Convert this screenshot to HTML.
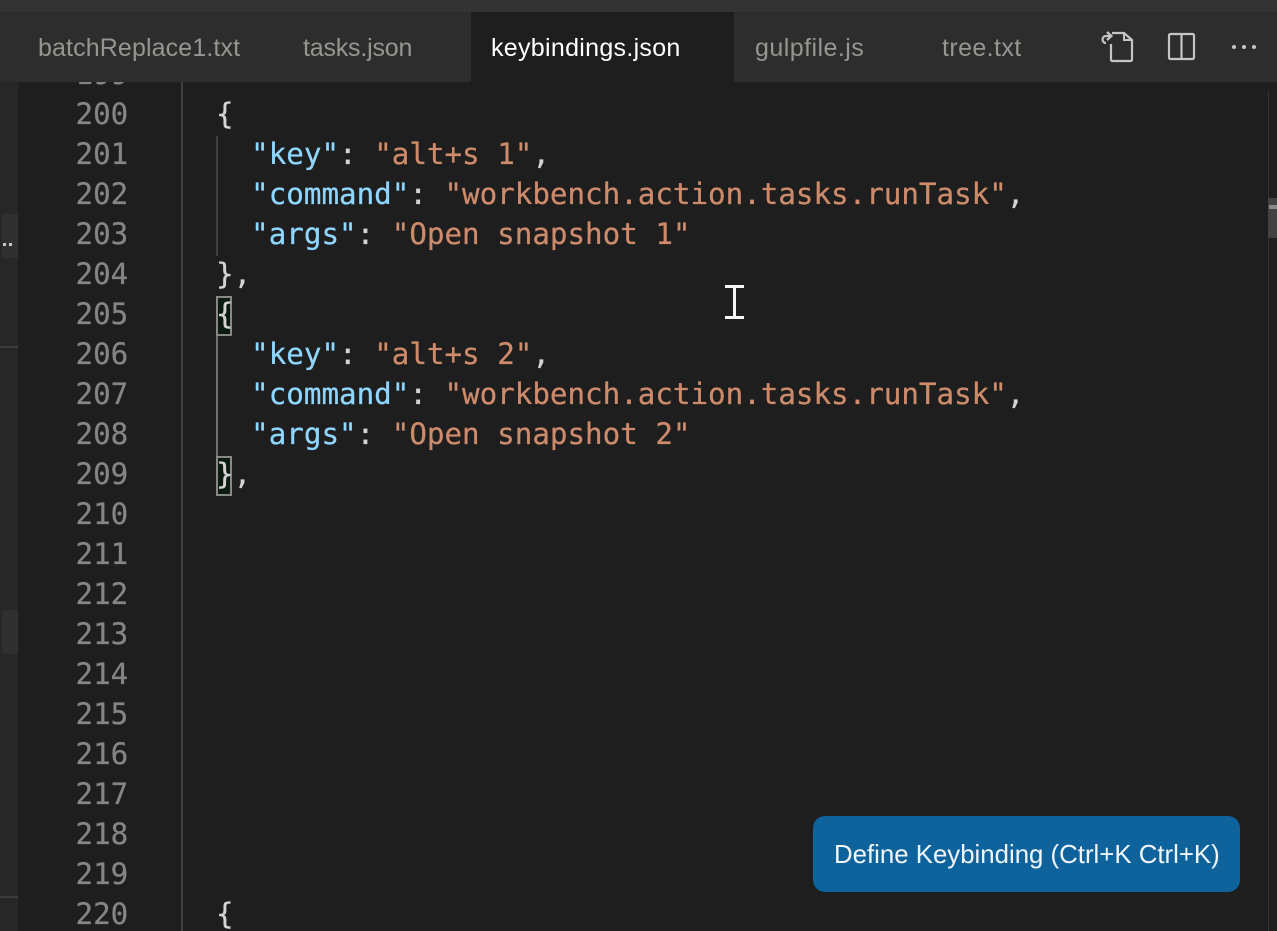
<!DOCTYPE html>
<html>
<head>
<meta charset="utf-8">
<style>
html,body{margin:0;padding:0;background:#1e1e1e;}
#r{position:relative;width:1277px;height:931px;overflow:hidden;background:#1e1e1e;}
#r div{position:absolute;}
.n,.c{font-family:"DejaVu Sans Mono","Liberation Mono",monospace;font-size:29.2px;line-height:40px;height:40px;white-space:pre;-webkit-text-stroke:.25px currentColor;}
.n{color:#858585;left:75.5px;}
.c{left:216px;color:#d4d4d4;}
.k{color:#8fd6ff;}
.s{color:#ce8b6c;}
.t{font-family:"Liberation Sans",sans-serif;font-size:25px;line-height:30px;top:33px;white-space:nowrap;color:#969690;}
</style>
</head>
<body>
<div id="r">
<div style="left:0;top:0;width:1277px;height:12px;background:#333333"></div>
<div style="left:0;top:12px;width:1277px;height:70px;background:#2d2d2d"></div>
<div style="left:471px;top:12px;width:263px;height:70px;background:#1e1e1e"></div>

<div class="t" style="left:38px;letter-spacing:.12px">batchReplace1.txt</div>
<div class="t" style="left:303px;letter-spacing:-.2px">tasks.json</div>
<div class="t" style="left:491px;color:#fff;letter-spacing:.3px">keybindings.json</div>
<div class="t" style="left:755px;letter-spacing:.45px">gulpfile.js</div>
<div class="t" style="left:942px;letter-spacing:.4px">tree.txt</div>

<svg style="position:absolute;left:1098px;top:28px" width="40" height="36" viewBox="0 0 40 36" fill="none" stroke="#c5c5c5" stroke-width="2.2">
<path d="M13 16V31.5a1.5 1.5 0 0 0 1.5 1.5H32.500a1.500 1.500 0 0 0 1.500-1.500V12L26 5H14"/>
<path d="M26 5V12H34" stroke-width="2"/>
<path d="M13 8H8a3.500 3.500 0 0 0 0 7" />
<path d="M9 4L13.500 8L9 12"/>
</svg>
<svg style="position:absolute;left:1166px;top:32px" width="30" height="30" viewBox="0 0 30 30" fill="none" stroke="#c5c5c5" stroke-width="2.200">
<rect x="3" y="2" width="25" height="25" rx="1.500"/>
<path d="M15.500 2V27"/>
</svg>
<div style="left:1232px;top:45px;width:4px;height:4px;border-radius:50%;background:#c5c5c5"></div>
<div style="left:1242px;top:45px;width:4px;height:4px;border-radius:50%;background:#c5c5c5"></div>
<div style="left:1252px;top:45px;width:4px;height:4px;border-radius:50%;background:#c5c5c5"></div>

<div style="left:0;top:82px;width:18px;height:849px;background:#272727"></div>
<div style="left:2px;top:214px;width:16px;height:44px;background:#303030"></div>
<div style="left:2px;top:610px;width:16px;height:44px;background:#303030"></div>
<div style="left:0;top:346px;width:18px;height:2px;background:#3c3c3c"></div>
<div style="left:0;top:896px;width:18px;height:2px;background:#3c3c3c"></div>
<div style="left:3px;top:243px;width:3px;height:3px;background:#c5c5c5"></div>
<div style="left:9px;top:243px;width:3px;height:3px;background:#c5c5c5"></div>

<div style="left:181px;top:82px;width:2px;height:849px;background:#404040"></div>
<div style="left:216px;top:136px;width:2px;height:120px;background:#404040"></div>
<div style="left:216px;top:336px;width:2px;height:120px;background:#707070"></div>

<div style="left:216px;top:296px;width:12px;height:36px;background:#0d1a10;border:2px solid #888"></div>
<div style="left:216px;top:456px;width:12px;height:36px;background:#0d1a10;border:2px solid #888"></div>

<div style="left:75.5px;top:82px;width:60px;height:4px;overflow:hidden"><div class="n" style="left:0;top:-28px">199</div></div>
<div class="n" style="top:94px">200</div>
<div class="n" style="top:134px">201</div>
<div class="n" style="top:174px">202</div>
<div class="n" style="top:214px">203</div>
<div class="n" style="top:254px">204</div>
<div class="n" style="top:294px">205</div>
<div class="n" style="top:334px">206</div>
<div class="n" style="top:374px">207</div>
<div class="n" style="top:414px">208</div>
<div class="n" style="top:454px">209</div>
<div class="n" style="top:494px">210</div>
<div class="n" style="top:534px">211</div>
<div class="n" style="top:574px">212</div>
<div class="n" style="top:614px">213</div>
<div class="n" style="top:654px">214</div>
<div class="n" style="top:694px">215</div>
<div class="n" style="top:734px">216</div>
<div class="n" style="top:774px">217</div>
<div class="n" style="top:814px">218</div>
<div class="n" style="top:854px">219</div>
<div class="n" style="top:894px">220</div>

<div class="c" style="top:94px">{</div>
<div class="c" style="top:134px">  <span class="k">"key"</span>: <span class="s">"alt+s 1"</span>,</div>
<div class="c" style="top:174px">  <span class="k">"command"</span>: <span class="s">"workbench.action.tasks.runTask"</span>,</div>
<div class="c" style="top:214px">  <span class="k">"args"</span>: <span class="s">"Open snapshot 1"</span></div>
<div class="c" style="top:254px">},</div>
<div class="c" style="top:294px">{</div>
<div class="c" style="top:334px">  <span class="k">"key"</span>: <span class="s">"alt+s 2"</span>,</div>
<div class="c" style="top:374px">  <span class="k">"command"</span>: <span class="s">"workbench.action.tasks.runTask"</span>,</div>
<div class="c" style="top:414px">  <span class="k">"args"</span>: <span class="s">"Open snapshot 2"</span></div>
<div class="c" style="top:454px">},</div>
<div class="c" style="top:894px">{</div>

<div style="left:1268px;top:90px;width:1px;height:841px;background:#333"></div>
<div style="left:1268px;top:198px;width:9px;height:40px;background:#424242"></div>
<div style="left:1269px;top:205px;width:8px;height:4px;background:#8a8a8a"></div>

<div style="left:725px;top:285px;width:19px;height:3px;background:#f4f4f4"></div>
<div style="left:733px;top:285px;width:3px;height:33px;background:#f4f4f4"></div>
<div style="left:725px;top:316px;width:19px;height:3px;background:#f4f4f4"></div>

<div style="left:813px;top:816px;width:427px;height:76px;border-radius:12px;background:#0e639c"></div>
<div style="left:834px;top:840px;font-family:'Liberation Sans',sans-serif;font-size:25.8px;line-height:30px;color:#f0f6fa;white-space:nowrap;">Define Keybinding (Ctrl+K Ctrl+K)</div>
</div>
</body>
</html>
